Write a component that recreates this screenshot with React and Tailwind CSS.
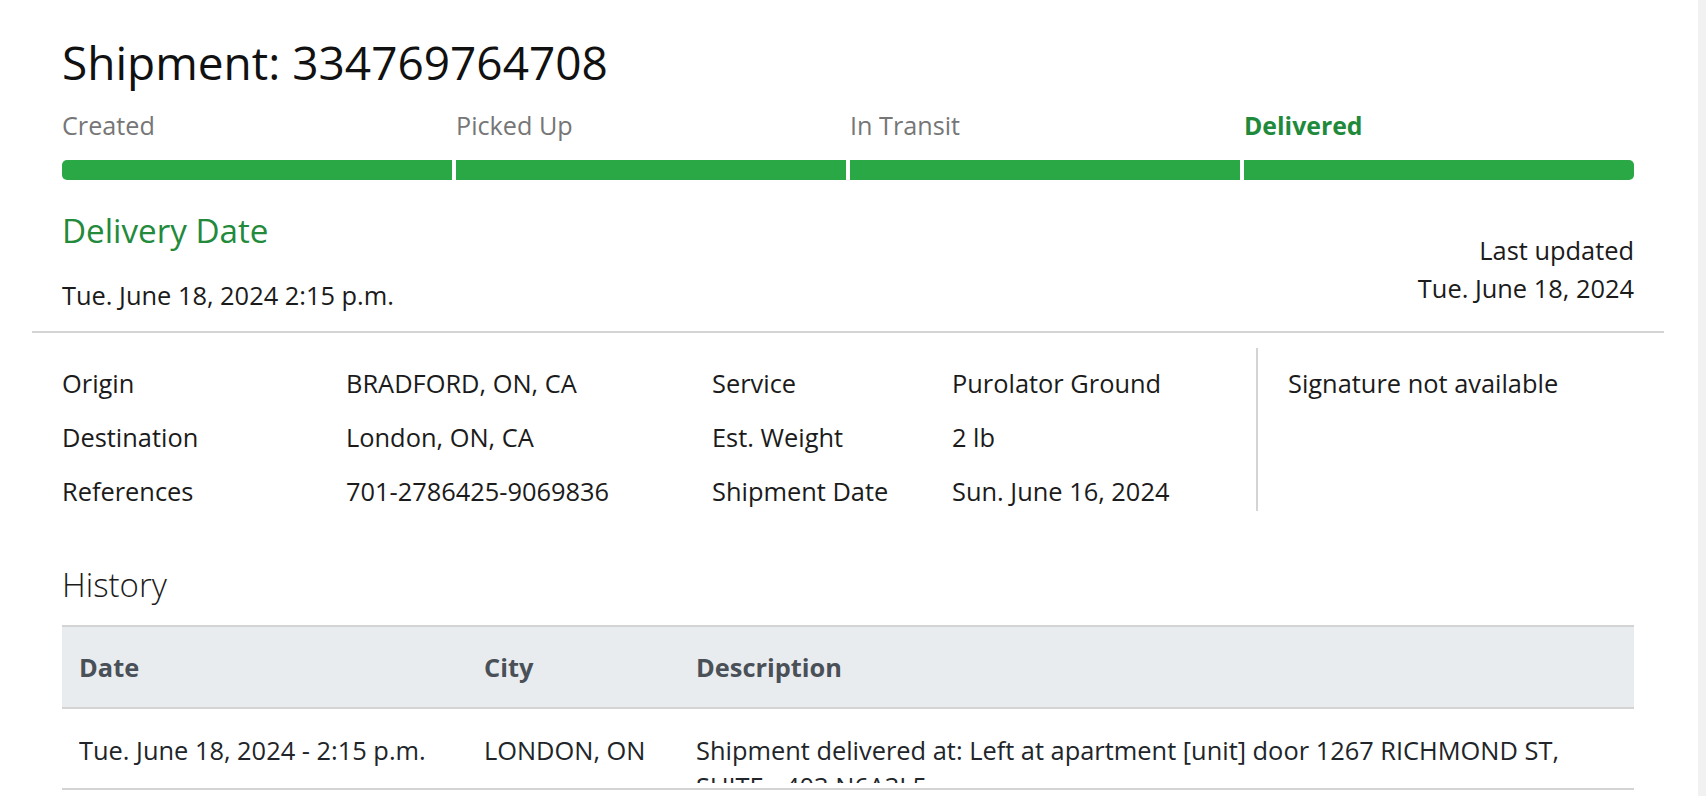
export default function App() {
  const steps = ["Created", "Picked Up", "In Transit", "Delivered"];
  const details = [
    ["Origin", "BRADFORD, ON, CA", "Service", "Purolator Ground"],
    ["Destination", "London, ON, CA", "Est. Weight", "2 lb"],
    ["References", "701-2786425-9069836", "Shipment Date", "Sun. June 16, 2024"],
  ];
  return (
    <div
      className="flex h-[796px] w-full overflow-hidden bg-white text-[#1b1b1b]"
      style={{ fontFamily: '"Open Sans", "Noto Sans", sans-serif' }}
    >
      <div className="flex-1 min-w-0">
        <div className="ml-[32px] w-[1632px]">
          <div className="px-[30px] pt-[34px] pb-[21px]">
            <h1 className="text-[46px] leading-[56px] font-normal text-[#111]">
              Shipment: 334769764708
            </h1>
            <div className="mt-[20px] grid grid-cols-4 gap-x-[4px] text-[25.2px] leading-[30px]">
              {steps.map((s, i) => (
                <div
                  key={s}
                  className={
                    i === 3 ? "font-bold text-[24.8px] text-[#1f8a3b]" : "text-[#767676]"
                  }
                >
                  {s}
                </div>
              ))}
            </div>
            <div className="mt-[20px] grid grid-cols-4 gap-x-[4px]">
              <div className="h-[20px] rounded-l-[5px] bg-[#2ba846]" />
              <div className="h-[20px] bg-[#2ba846]" />
              <div className="h-[20px] bg-[#2ba846]" />
              <div className="h-[20px] rounded-r-[5px] bg-[#2ba846]" />
            </div>
            <div className="mt-[31px] flex justify-between">
              <div>
                <div className="text-[33.2px] leading-[40px] text-[#238a3c]">Delivery Date</div>
                <div className="mt-[29px] text-[25.4px] leading-[30px]">
                  Tue. June 18, 2024 2:15 p.m.
                </div>
              </div>
              <div className="mt-[20px] text-right text-[25.4px] leading-[38px]">
                <div>Last updated</div>
                <div>Tue. June 18, 2024</div>
              </div>
            </div>
          </div>
          <div className="h-[2px] bg-[#d4d4d4]" />
          <div className="px-[30px]">
            <div className="mt-[15px] flex h-[163px]">
              <div className="grid grid-cols-[284px_366px_240px_304px] content-start gap-y-[24px] pt-[20px] text-[25.4px] leading-[30px]">
                {details.map((r) =>
                  r.map((c, j) => <div key={r[0] + j}>{c}</div>)
                )}
              </div>
              <div className="border-l-2 border-[#d4d4d4] pl-[30px] pt-[20px] text-[25.4px] leading-[30px]">
                Signature not available
              </div>
            </div>
            <h2 className="mt-[55px] text-[33px] leading-[38px] font-light text-[#1b1b1b]">
              History
            </h2>
            <div className="mt-[21px]">
              <div className="grid grid-cols-[405px_212px_1fr] border-t-2 border-b-2 border-[#d4d4d4] bg-[#e9ecef] text-[25.4px] font-bold leading-[30px] text-[#495057]">
                <div className="px-[17px] py-[25px]">Date</div>
                <div className="px-[17px] py-[25px]">City</div>
                <div className="px-[17px] py-[25px]">Description</div>
              </div>
              <div className="grid grid-cols-[405px_212px_1fr] border-b-2 border-[#d4d4d4] text-[25.4px] leading-[36px] text-[#212529]">
                <div className="px-[17px] pt-[23px] pb-[5px]">
                  <div className="h-[51px] overflow-hidden">Tue. June 18, 2024 - 2:15 p.m.</div>
                </div>
                <div className="px-[17px] pt-[23px] pb-[5px]">
                  <div className="h-[51px] overflow-hidden">LONDON, ON</div>
                </div>
                <div className="px-[17px] pt-[23px] pb-[5px]">
                  <div className="h-[51px] overflow-hidden">
                    Shipment delivered at: Left at apartment [unit] door 1267 RICHMOND ST, SUITE - 403 N6A3L5
                  </div>
                </div>
              </div>
            </div>
          </div>
        </div>
      </div>
      <div className="w-[8px] shrink-0 bg-[#f1f1f1]" />
    </div>
  );
}
